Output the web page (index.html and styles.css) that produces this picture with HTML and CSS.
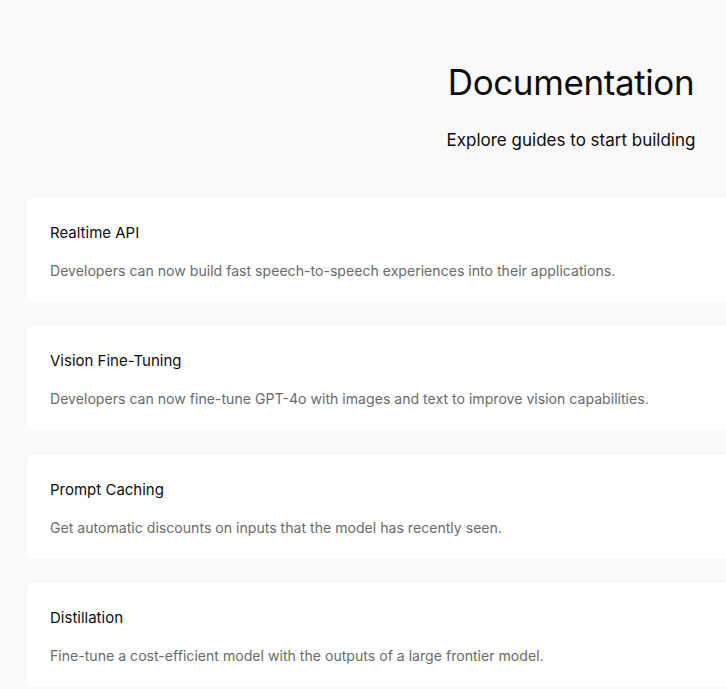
FILE: index.html
```html
<!DOCTYPE html>
<html lang="en">
<head>
    <meta charset="UTF-8">
    <meta name="viewport" content="width=device-width, initial-scale=1.0">
    <title>Documentation</title>
    <link rel="stylesheet" href="styles.css">
</head>
<body>
    <div class="container">
        <div class="header">
            <h1>Documentation</h1>
            <p class="subtitle">Explore guides to start building</p>
        </div>

        <div class="cards">
            <div class="card">
                <h3>Realtime API</h3>
                <p>Developers can now build fast speech-to-speech experiences into their applications.</p>
            </div>
            <div class="card">
                <h3>Vision Fine-Tuning</h3>
                <p>Developers can now fine-tune GPT-4o with images and text to improve vision capabilities.</p>
            </div>
            <div class="card">
                <h3>Prompt Caching</h3>
                <p>Get automatic discounts on inputs that the model has recently seen.</p>
            </div>
            <div class="card">
                <h3>Distillation</h3>
                <p>Fine-tune a cost-efficient model with the outputs of a large frontier model.</p>
            </div>
        </div>
    </div>
</body>
</html>
```

FILE: styles.css
```css
body {
    font-family: Inter, "Noto Sans", sans-serif;
    background-color: #f9f9f9;
    color: #0d0d0d;
    margin: 0;
    padding: 0;
}

.container {
    width: 1088px;
    margin-left: 27px;
    padding-top: 60px;
}

.header {
    text-align: center;
}

h1 {
    font-size: 35px;
    font-weight: 400;
    margin: 0;
    line-height: 44px;
    letter-spacing: -0.4px;
}

.subtitle {
    font-size: 17px;
    margin: 23px 0 0;
    line-height: 26px;
}

.cards {
    display: flex;
    flex-direction: column;
    gap: 24.4px;
    margin-top: 45px;
}

.card {
    background: #fff;
    border-radius: 6px;
    padding: 23px 23px 22px;
    height: 104px;
    box-sizing: border-box;
}

.card h3 {
    font-size: 15px;
    font-weight: 400;
    line-height: 24px;
    margin: 0;
}

.card p {
    font-size: 14.1px;
    line-height: 24px;
    color: #6b6b6b;
    margin: 14px 0 0;
}
```
